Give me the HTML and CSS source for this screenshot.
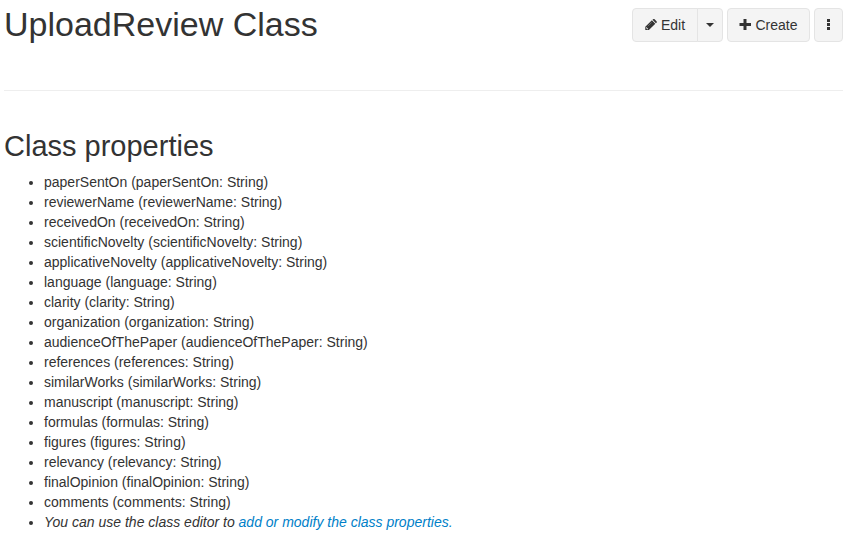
FILE: index.html
```html
<!DOCTYPE html>
<html lang="en">
<head>
<meta charset="utf-8">
<title>UploadReview Class</title>
<link rel="stylesheet" href="styles.css">
</head>
<body>
<header class="page-header">
<h1>UploadReview Class</h1>
<div class="toolbar">
<div class="btn-group">
<button class="btn btn-edit"><svg class="icon" viewBox="0 0 12 12"><path d="M.3 7.700 6.900 1.300l3.400 3.400-6.400 6.400H.3zM7.500.8 8.100.2q.8-.5 1.500.1l1.900 1.900q.6.700 0 1.500l-.6.5z"/><path class="cut" d="m1.300 8.100 1.900 1.900-.4.300H2v-.9h-.9v-.9z"/><path class="shine" d="M2.800 7.200 6.800 3.300"/></svg>Edit</button>
<button class="btn btn-caret" aria-label="More edit options"><span class="caret"></span></button>
</div>
<button class="btn btn-create"><svg class="icon" viewBox="0 0 12 12"><path d="M4.500 0h3v4H12v3H7.500v4h-3V7H.500V4h4z"/></svg>Create</button>
<button class="btn btn-more" aria-label="More actions"><svg class="dots" viewBox="0 0 3 11"><path d="M0 0h3v3H0zM0 4h3v3H0zM0 8h3v3H0z"/></svg></button>
</div>
</header>
<main>
<h2>Class properties</h2>
<ul>
<li>paperSentOn (paperSentOn: String)</li>
<li>reviewerName (reviewerName: String)</li>
<li>receivedOn (receivedOn: String)</li>
<li>scientificNovelty (scientificNovelty: String)</li>
<li>applicativeNovelty (applicativeNovelty: String)</li>
<li>language (language: String)</li>
<li>clarity (clarity: String)</li>
<li>organization (organization: String)</li>
<li>audienceOfThePaper (audienceOfThePaper: String)</li>
<li>references (references: String)</li>
<li>similarWorks (similarWorks: String)</li>
<li>manuscript (manuscript: String)</li>
<li>formulas (formulas: String)</li>
<li>figures (figures: String)</li>
<li>relevancy (relevancy: String)</li>
<li>finalOpinion (finalOpinion: String)</li>
<li>comments (comments: String)</li>
<li><em>You can use the class editor to <a href="#">add or modify the class properties.</a></em></li>
</ul>
</main>
</body>
</html>
```
FILE: styles.css
```css
* { box-sizing: border-box; }
body { margin: 0; padding: 0 12px 0 4px; background: #fff; color: #333; font: 14px/20px "Liberation Sans", Arial, sans-serif; overflow: hidden; }
.page-header { display: flex; justify-content: space-between; align-items: flex-start; height: 91px; border-bottom: 1px solid #eee; }
h1, h2 { margin: 0; font-weight: 400; }
h1 { padding-top: 4px; font-size: 34px; line-height: 40px; }
h2 { margin-top: 39px; font-size: 29px; line-height: 33px; }
.toolbar { display: flex; gap: 4px; padding-top: 8px; }
.btn-group { display: flex; }
.btn { display: flex; align-items: center; justify-content: center; height: 34px; margin: 0; padding: 0; border: 1px solid #e4e4e4; border-radius: 4px; background: #f4f4f4; color: #333; font: inherit; }
.btn-edit { width: 66px; border-radius: 4px 0 0 4px; }
.btn-caret { width: 26px; margin-left: -1px; border-radius: 0 4px 4px 0; }
.btn-create { width: 83px; }
.btn-more { width: 29px; }
.icon { width: 12px; height: 12px; margin-right: 4px; fill: #333; }
.cut { fill: #f4f4f4; }
.shine { fill: none; stroke: #999; stroke-width: .5; }
.caret { border-top: 4px solid #333; border-left: 4px solid transparent; border-right: 4px solid transparent; }
.dots { width: 3px; height: 11px; margin-bottom: 2px; fill: #333; }
ul { margin: 9px 0 0; padding-left: 40px; }
a { color: #0080c8; text-decoration: none; }
```
